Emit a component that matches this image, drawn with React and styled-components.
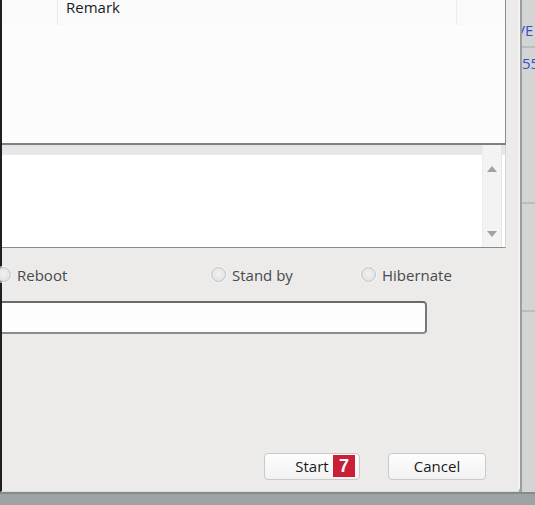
import React from 'react';
import styled, { createGlobalStyle } from 'styled-components';

const GlobalStyle = createGlobalStyle`
  html, body {
    margin: 0;
    padding: 0;
    background: #9ea3a3;
  }
  body {
    font-family: "Open Sans", "Noto Sans", sans-serif;
    font-size: 15px;
    overflow: hidden;
  }
`;

const Screen = styled.div`
  width: 535px;
  height: 505px;
  display: flex;
  flex-direction: column;
  background: #9ea3a3;
`;

const Desktop = styled.div`
  display: flex;
  height: 494px;
  border-bottom: 2px solid #858a8a;
  box-sizing: border-box;
`;

const Dialog = styled.div`
  width: 522px;
  height: 492px;
  box-sizing: border-box;
  display: flex;
  flex-direction: column;
  background: #ecebe9;
  border-left: 2px solid #1d1f21;
  border-right: 2px solid #9a9d9d;
  border-bottom: 1px solid #dcdcdc;
  border-bottom-right-radius: 5px;
  box-shadow: inset -12px 0 0 -10px #f4f4f4;
`;

const ListPanel = styled.div`
  width: 504px;
  height: 145px;
  box-sizing: border-box;
  background: #fcfcfc;
  border-right: 1px solid #8c8c8c;
  border-bottom: 2px solid #7e7e7e;
`;

const ListHeader = styled.div`
  display: grid;
  grid-template-columns: 56px 399px 1fr;
  height: 25px;
  background: #fafafa;
`;

const HeaderCell = styled.div`
  border-right: 1px solid ${p => (p.$last ? 'transparent' : '#ebebeb')};
  padding-left: ${p => p.$pad || 0}px;
  color: #1c1c1c;
  line-height: 15px;
`;

const TextBox = styled.div`
  width: 504px;
  height: 103px;
  box-sizing: border-box;
  display: flex;
  background: linear-gradient(#e4e4e6 0, #e8e8ea 10px, #ffffff 10px);
  border-right: 1px solid #d6d6d6;
  border-bottom: 1px solid #8a8a8a;
`;

const TextArea = styled.div`
  flex: 1;
`;

const ScrollBar = styled.div`
  width: 18px;
  margin-right: 3px;
  display: flex;
  flex-direction: column;
  justify-content: space-between;
  align-items: center;
  padding: 21px 0 10px;
  background: #f3f3f3;
  border-left: 1px solid #ececec;
  border-right: 1px solid #e6e6e6;
`;

const Arrow = styled.div`
  width: 0;
  height: 0;
  border-left: 5px solid transparent;
  border-right: 5px solid transparent;
  ${p => (p.$down
    ? 'border-top: 6px solid #a2a2a2;'
    : 'border-bottom: 6px solid #a2a2a2;')}
`;

const RadioRow = styled.div`
  height: 53px;
  display: grid;
  grid-template-columns: 215px 150px auto;
  align-items: center;
  margin-left: -6px;
`;

const RadioItem = styled.label`
  display: flex;
  align-items: center;
  gap: 6px;
  color: #474a4f;
  line-height: 20px;
`;

const RadioCircle = styled.span`
  width: 13px;
  height: 13px;
  border-radius: 50%;
  border: 1px solid #c4c4c4;
  background: radial-gradient(circle at 50% 45%, #f2f2f2 0, #e2e2e2 70%);
  box-shadow: 0 0 0 1px #f6f6f6;
`;

const InputBox = styled.div`
  width: 425px;
  height: 33px;
  box-sizing: border-box;
  background: #fdfdfd;
  border-top: 2px solid #6a6a6a;
  border-right: 2px solid #777777;
  border-bottom: 2px solid #8c8c8c;
  border-radius: 0 4px 4px 0;
`;

const Footer = styled.div`
  margin-top: auto;
  display: flex;
  justify-content: flex-end;
  gap: 28px;
  padding: 0 34px 11px 0;
`;

const Button = styled.button`
  position: relative;
  width: ${p => p.$w}px;
  height: 27px;
  box-sizing: border-box;
  border: 1px solid #c9c9c9;
  border-radius: 4px;
  background: linear-gradient(#fdfdfd, #f2f2f2);
  font-family: "Open Sans", "Noto Sans", sans-serif;
  font-size: 15px;
  color: #1a1a1a;
  padding: 0;
  line-height: 25px;
`;

const Badge = styled.span`
  position: absolute;
  left: 68px;
  top: 1px;
  width: 22px;
  height: 22px;
  background: #c91f37;
  color: #ffffff;
  font-family: "Liberation Sans", Arial, sans-serif;
  font-weight: 700;
  font-size: 18px;
  line-height: 22px;
  text-align: center;
`;

const SideWindow = styled.div`
  flex: 1;
  overflow: hidden;
  background: #d3d4d4;
  display: flex;
  flex-direction: column;
`;

const SideCell = styled.div`
  height: ${p => p.$h}px;
  box-sizing: border-box;
  padding-top: ${p => p.$top || 0}px;
  border-bottom: 2px solid #bcbebe;
  color: #3b4ec4;
  white-space: nowrap;
  line-height: 20px;
  margin-left: ${p => p.$shift || 0}px;
`;

export default function App() {
  return (
    <>
      <GlobalStyle />
      <Screen>
        <Desktop>
          <Dialog>
            <ListPanel>
              <ListHeader>
                <HeaderCell />
                <HeaderCell $pad={8}>Remark</HeaderCell>
                <HeaderCell $last />
              </ListHeader>
            </ListPanel>
            <TextBox>
              <TextArea />
              <ScrollBar>
                <Arrow />
                <Arrow $down />
              </ScrollBar>
            </TextBox>
            <RadioRow>
              <RadioItem><RadioCircle />Reboot</RadioItem>
              <RadioItem><RadioCircle />Stand by</RadioItem>
              <RadioItem><RadioCircle />Hibernate</RadioItem>
            </RadioRow>
            <InputBox />
            <Footer>
              <Button $w={96}>
                Start
                <Badge>7</Badge>
              </Button>
              <Button $w={98}>Cancel</Button>
            </Footer>
          </Dialog>
          <SideWindow>
            <SideCell $h={48} $top={20} $shift={-6}>VE</SideCell>
            <SideCell $h={156} $top={5}>55</SideCell>
            <SideCell $h={108} />
          </SideWindow>
        </Desktop>
      </Screen>
    </>
  );
}
